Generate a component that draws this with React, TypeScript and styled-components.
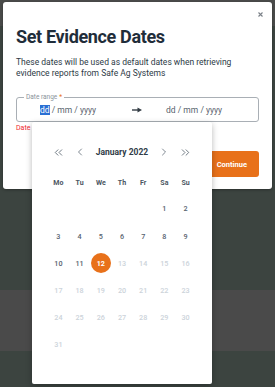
import React from 'react'
import styled, { createGlobalStyle } from 'styled-components'
import { ChevronLeft, ChevronRight, ChevronsLeft, ChevronsRight } from 'lucide-react'

const GlobalStyle = createGlobalStyle`
  html, body {
    margin: 0;
    padding: 0;
  }
  body {
    font-family: Roboto, 'Liberation Sans', sans-serif;
    background: #3c4440;
  }
  * {
    box-sizing: border-box;
  }
`

const Page = styled.div`
  position: relative;
  width: 275px;
  height: 387px;
  overflow: hidden;
  background: #3c4440;
  display: flex;
  flex-direction: column;
`

const TopBar = styled.div`
  height: 26px;
  background: #4a4b4a;
`

const Band = styled.div`
  margin-top: 264px;
  height: 61px;
  background: #4a4a4a;
`

const Modal = styled.div`
  position: absolute;
  top: 2px;
  left: 3px;
  width: 269px;
  height: 187px;
  background: #fff;
  border-radius: 3px;
  box-shadow: 0 1px 3px rgba(0, 0, 0, 0.3);
  padding: 24px 13px 12px;
  display: flex;
  flex-direction: column;
`

const CloseButton = styled.button`
  position: absolute;
  top: 8px;
  right: 7px;
  width: 9px;
  height: 9px;
  padding: 0;
  border: 0;
  background: transparent;
  display: flex;
  align-items: center;
  justify-content: center;
  color: #7a8087;
`

const Title = styled.h1`
  margin: 0;
  font-size: 18px;
  line-height: 22px;
  font-weight: 700;
  letter-spacing: -0.35px;
  color: #1f2d3a;
`

const Description = styled.p`
  margin: 9px 0 0;
  font-size: 8.5px;
  line-height: 10.5px;
  color: #2d3a46;
`

const Field = styled.div`
  position: relative;
  margin-top: 19px;
  height: 25px;
  border: 1px solid #a9afb5;
  border-radius: 3px;
  display: flex;
  align-items: center;
  padding-left: 23px;
`

const FieldLabel = styled.span`
  position: absolute;
  top: -5px;
  left: 7px;
  padding: 0 2px;
  background: #fff;
  font-size: 6.5px;
  line-height: 8px;
  color: #8a939b;
`

const Required = styled.span`
  color: #e8711a;
  margin-left: 2px;
`

const DateText = styled.span<{ $gap: number }>`
  font-size: 8.5px;
  line-height: 10px;
  color: #56616b;
  margin-right: ${p => p.$gap}px;
`

const Segment = styled.span<{ $selected?: boolean }>`
  background: ${p => (p.$selected ? '#2a6fd3' : 'transparent')};
  color: ${p => (p.$selected ? '#fff' : 'inherit')};
`

const Arrow = styled.svg`
  flex: none;
  margin-right: 24px;
`

const ErrorText = styled.div`
  margin-top: 2px;
  font-size: 7px;
  line-height: 9px;
  color: #f0282d;
`

const Actions = styled.div`
  margin-top: 18px;
  display: flex;
  justify-content: flex-end;
`

const PrimaryButton = styled.button`
  height: 26px;
  padding: 0 12px;
  border: 0;
  border-radius: 3px;
  background: #e8711a;
  color: #fff;
  font-family: Roboto, 'Liberation Sans', sans-serif;
  font-size: 7.5px;
  font-weight: 700;
`

const Popup = styled.div`
  position: absolute;
  top: 24px;
  left: 15px;
  width: 180px;
  height: 262px;
  background: #fff;
  border-radius: 2px;
  box-shadow: 0 2px 6px rgba(0, 0, 0, 0.28);
  z-index: 2;
  padding-top: 20px;
`

const Grid = styled.div`
  width: 148.4px;
  margin: 0 auto;
  display: grid;
  grid-template-columns: repeat(7, 1fr);
`

const NavButton = styled.button`
  height: 20px;
  padding: 0;
  border: 0;
  background: transparent;
  color: #5d6873;
  display: flex;
  align-items: center;
  justify-content: center;
`

const MonthTitle = styled.div`
  grid-column: span 3;
  height: 20px;
  display: flex;
  align-items: center;
  justify-content: center;
  font-size: 8.5px;
  font-weight: 700;
  color: #2f3c48;
`

const WeekdayRow = styled(Grid)`
  margin-top: 11px;
  height: 20px;
  align-items: center;
`

const Weekday = styled.div`
  text-align: center;
  font-size: 7px;
  font-weight: 700;
  color: #4b5662;
`

const DaysGrid = styled(Grid)`
  margin-top: 2.4px;
  grid-auto-rows: 27.2px;
`

const Day = styled.div<{ $disabled?: boolean; $selected?: boolean }>`
  display: flex;
  align-items: center;
  justify-content: center;
  span {
    width: 20px;
    height: 20px;
    border-radius: 50%;
    display: flex;
    align-items: center;
    justify-content: center;
    font-size: 7.2px;
    font-weight: ${p => (p.$selected ? 700 : 500)};
    background: ${p => (p.$selected ? '#e8711a' : 'transparent')};
    color: ${p => (p.$selected ? '#fff' : p.$disabled ? '#ccd3da' : '#56626e')};
  }
`

const weekdays = ['Mo', 'Tu', 'We', 'Th', 'Fr', 'Sa', 'Su']
const days = Array.from({ length: 31 }, (_, i) => i + 1)

function DateInput({ gap, selected }: { gap: number; selected?: boolean }) {
  return (
    <DateText $gap={gap}>
      <Segment $selected={selected}>dd</Segment> / mm / yyyy
    </DateText>
  )
}

export default function App() {
  return (
    <>
      <GlobalStyle />
      <Page>
        <TopBar />
        <Band />
        <Modal>
          <CloseButton aria-label="Close">
            <svg width="5" height="5" viewBox="0 0 5 5">
              <path d="M0.5 0.5 L4.5 4.5 M4.5 0.5 L0.5 4.5" stroke="currentColor" strokeWidth="1.1" />
            </svg>
          </CloseButton>
          <Title>Set Evidence Dates</Title>
          <Description>
            These dates will be used as default dates when retrieving evidence reports from Safe Ag Systems
          </Description>
          <Field>
            <FieldLabel>
              Date range<Required>*</Required>
            </FieldLabel>
            <DateInput gap={36} selected />
            <Arrow width="10" height="6" viewBox="0 0 10 6">
              <path d="M0 3 H6.5" stroke="#333c44" strokeWidth="1.4" />
              <path d="M5.5 0.4 L10 3 L5.5 5.6 Z" fill="#333c44" />
            </Arrow>
            <DateInput gap={0} />
            <Popup>
              <Grid>
                <NavButton aria-label="Previous year">
                  <ChevronsLeft size={13} strokeWidth={1.6} />
                </NavButton>
                <NavButton aria-label="Previous month">
                  <ChevronLeft size={12} strokeWidth={1.6} />
                </NavButton>
                <MonthTitle>January 2022</MonthTitle>
                <NavButton aria-label="Next month">
                  <ChevronRight size={12} strokeWidth={1.6} />
                </NavButton>
                <NavButton aria-label="Next year">
                  <ChevronsRight size={13} strokeWidth={1.6} />
                </NavButton>
              </Grid>
              <WeekdayRow>
                {weekdays.map(w => (
                  <Weekday key={w}>{w}</Weekday>
                ))}
              </WeekdayRow>
              <DaysGrid>
                {Array.from({ length: 5 }, (_, i) => (
                  <div key={'e' + i} />
                ))}
                {days.map(d => (
                  <Day key={d} $selected={d === 12} $disabled={d > 12}>
                    <span>{d}</span>
                  </Day>
                ))}
              </DaysGrid>
            </Popup>
          </Field>
          <ErrorText>Date range is required</ErrorText>
          <Actions>
            <PrimaryButton>Continue</PrimaryButton>
          </Actions>
        </Modal>
      </Page>
    </>
  )
}
